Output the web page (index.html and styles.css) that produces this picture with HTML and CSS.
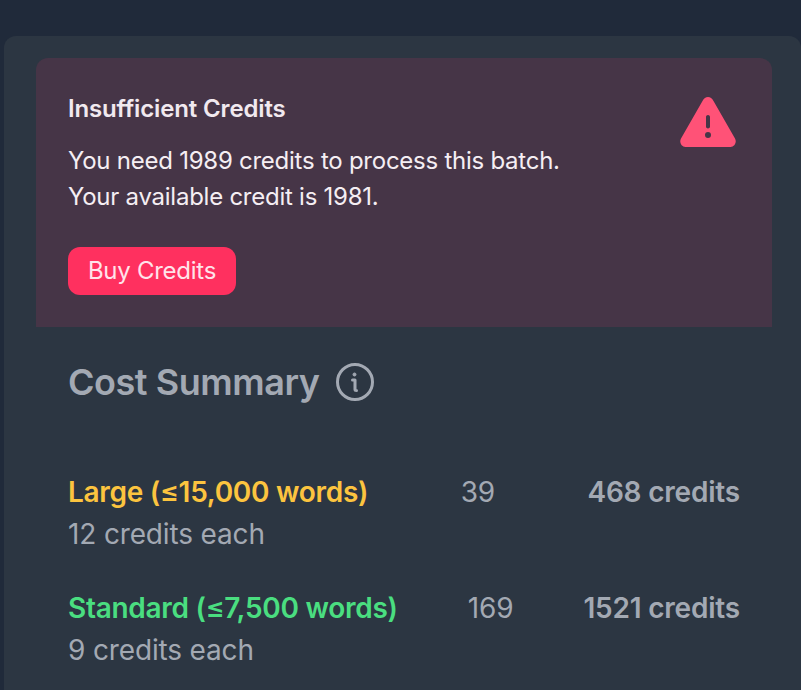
FILE: index.html
```html
<!doctype html>
<html lang="en">

<head>
    <meta charset="UTF-8">
    <title>Cost Summary</title>
    <link rel="stylesheet" href="styles.css">
</head>

<body>
    <section class="card">
        <div class="alert">
            <div class="alert--body">
                <h3 class="alert--title">Insufficient Credits</h3>
                <p class="alert--text">You need 1989 credits to process this batch.<br>Your available credit is 1981.</p>
                <button class="alert--button">Buy Credits</button>
            </div>
            <svg class="alert--icon" viewBox="0 0 56 50" width="56" height="50">
                <path fill="#ff5277" fill-rule="evenodd" d="M22.500 4 1 41.500C-1 45 1.200 50 5.500 50h45c4.300 0 6.500-5 4.500-8.500L33.500 4c-2.500-5.300-8.500-5.300-11 0ZM28 18c1.100 0 2 .9 2 2v9.500c0 1.100-.9 2-2 2s-2-.9-2-2V20c0-1.100.9-2 2-2Zm0 17a3 3 0 1 1 0 6 3 3 0 0 1 0-6Z"/>
            </svg>
        </div>

        <div class="summary">
            <h2 class="summary--title">
                Cost Summary
                <svg class="summary--info" viewBox="0 0 38 38" width="38" height="38" fill="none" stroke="#a3a9b3" stroke-width="3">
                    <circle cx="19" cy="19" r="17.500"/>
                    <path stroke-linecap="round" stroke-linejoin="round" d="M16.500 17H19v9.500c0 .8.500 1 1.500 1"/>
                    <circle cx="18.500" cy="11.500" r="1.500" fill="#a3a9b3" stroke-width="1"/>
                </svg>
            </h2>

            <div class="tier">
                <div>
                    <div class="tier--name tier--large">Large (≤15,000 words)</div>
                    <div class="tier--each">12 credits each</div>
                </div>
                <div class="tier--count">39</div>
                <div class="tier--total">468 credits</div>
            </div>

            <div class="tier">
                <div>
                    <div class="tier--name tier--standard">Standard (≤7,500 words)</div>
                    <div class="tier--each">9 credits each</div>
                </div>
                <div class="tier--count">169</div>
                <div class="tier--total">1521 credits</div>
            </div>
        </div>
    </section>
</body>

</html>
```

FILE: styles.css
```css
html, body {
    height: 690px;
    overflow: hidden;
}

body {
    margin: 0;
    padding: 36px 0 0 4px;
    box-sizing: border-box;
    background-color: #202a3a;
    font-family: "Inter", "Noto Sans", sans-serif;
    color: #a3a9b3;
}

.card {
    background-color: #2c3642;
    border-radius: 12px 12px 0 0;
    padding: 22px 29px 0 32px;
    height: 654px;
    box-sizing: border-box;
}

.alert {
    display: flex;
    justify-content: space-between;
    background-color: #463547;
    border-radius: 12px 12px 0 0;
    padding: 38px 36px 32px 32px;
    height: 269px;
    box-sizing: border-box;
}

.alert--title {
    font-size: 24px;
    line-height: 26px;
    font-weight: 600;
    letter-spacing: -0.15px;
    color: #f1e9ef;
    margin: 0;
}

.alert--text {
    font-size: 24px;
    line-height: 36px;
    letter-spacing: -0.25px;
    color: #f5eef3;
    margin: 21px 0 0;
}

.alert--button {
    display: block;
    margin-top: 32px;
    width: 168px;
    height: 48px;
    background-color: #ff305f;
    color: #ffe3ea;
    font-family: inherit;
    font-size: 24px;
    line-height: 47px;
    letter-spacing: -0.27px;
    border: none;
    border-radius: 12px;
    padding: 0 0 1px;
}

.alert--icon {
    margin-top: 1px;
    flex: none;
}

.summary {
    padding: 0 32px;
}

.summary--title {
    display: flex;
    align-items: center;
    gap: 16px;
    font-size: 36px;
    line-height: 38px;
    font-weight: 600;
    letter-spacing: -0.45px;
    margin: 36px 0 0;
}

.tier {
    display: flex;
    justify-content: space-between;
    font-size: 28px;
    line-height: 42px;
    letter-spacing: -0.15px;
}

.summary--title + .tier {
    margin-top: 70px;
}

.tier + .tier {
    margin-top: 32px;
}

.tier--name {
    font-weight: 600;
    letter-spacing: -0.28px;
}

.tier--large {
    color: #fcc43f;
}

.tier--standard {
    color: #4ade80;
}

.tier--total {
    font-weight: 600;
    letter-spacing: -0.2px;
}
```
